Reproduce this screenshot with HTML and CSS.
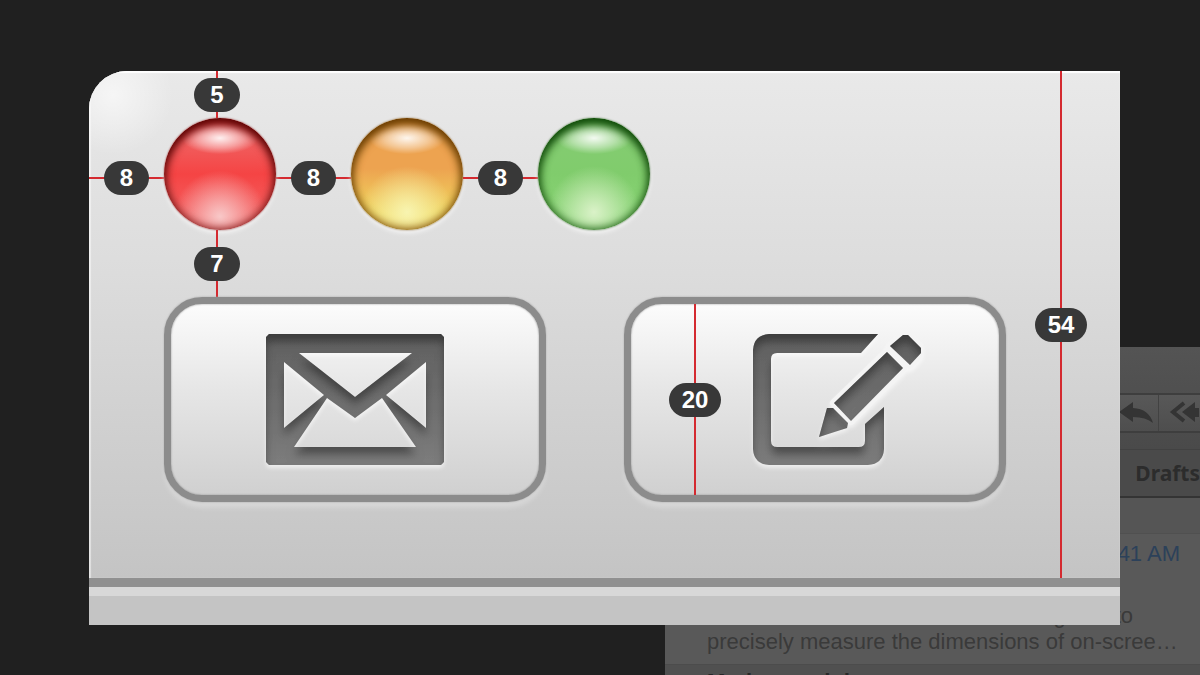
FILE: index.html
```html
<!DOCTYPE html>
<html lang="en">
<head>
  <meta charset="UTF-8" />
  <meta name="viewport" content="width=device-width, initial-scale=1.0" />
  <title>Toolbar dimensions</title>
  <link rel="stylesheet" href="styles.css">
</head>
<body>
  <div class="desktop">

    <!-- mail window in the background -->
    <section class="mail">
      <div class="mail-toolbar">
        <div class="reply-group">
          <button type="button" class="reply" aria-label="Reply">
            <svg width="40" height="32" viewBox="0 0 40 32"><path d="M3 15 L17 5 V11 Q33 12 37 26 Q30 20 17 20 V25 Z"/></svg>
          </button>
          <button type="button" class="reply" aria-label="Reply all">
            <svg width="40" height="32" viewBox="0 0 40 32"><path d="M25 6 L14 15 L25 24" class="chevron"/><path d="M23 15 L36 5 V11 H40 V20 H36 V25 Z"/></svg>
          </button>
        </div>
      </div>
      <div class="mail-tabs">Drafts</div>
      <div class="mail-sort"></div>
      <article class="message">
        <div class="time">41 AM</div>
        <p class="preview"><span class="lead">designers to</span>precisely measure the dimensions of on-scree…</p>
      </article>
      <div class="next">Markup and decor</div>
    </section>

    <!-- enlarged toolbar -->
    <main class="panel">
      <div class="toolbar">
        <div class="lights">
          <div class="measure-h"><span class="pill">8</span></div>
          <div class="light-box">
            <div class="measure-v above"><span class="pill">5</span></div>
            <button type="button" class="light red" aria-label="Close"></button>
            <div class="measure-v below"><span class="pill">7</span></div>
          </div>
          <div class="measure-h"><span class="pill">8</span></div>
          <button type="button" class="light yellow" aria-label="Minimize"></button>
          <div class="measure-h"><span class="pill">8</span></div>
          <button type="button" class="light green" aria-label="Zoom"></button>
        </div>

        <div class="buttons">
          <button type="button" class="tool" aria-label="Get mail">
            <svg class="icon" width="178" height="131" viewBox="0 0 178 131">
              <defs>
                <linearGradient id="metal" x1="0" y1="0" x2="0" y2="131" gradientUnits="userSpaceOnUse">
                  <stop offset="0" stop-color="#606060"/>
                  <stop offset="1" stop-color="#7c7c7c"/>
                </linearGradient>
                <filter id="inset" x="-10%" y="-10%" width="120%" height="120%">
                  <feOffset in="SourceAlpha" dx="0" dy="8"/>
                  <feGaussianBlur stdDeviation="4"/>
                  <feComposite in="SourceAlpha" operator="out" result="edge"/>
                  <feFlood flood-color="#000" flood-opacity="0.6"/>
                  <feComposite in2="edge" operator="in" result="shade"/>
                  <feMerge>
                    <feMergeNode in="SourceGraphic"/>
                    <feMergeNode in="shade"/>
                  </feMerge>
                  <feGaussianBlur stdDeviation="0.7"/>
                </filter>
              </defs>
              <path filter="url(#inset)" fill="url(#metal)" fill-rule="evenodd" d="M3 0 H175 L178 3 V128 L175 131 H3 L0 128 V3 Z
                M33 19 L89 63 L146 19 Z
                M18 28 V94 L58 61 Z
                M160 28 V94 L120 61 Z
                M28 113 H150 L116 64 L89 84 L61 64 Z"/>
            </svg>
          </button>
          <button type="button" class="tool compose" aria-label="New message">
            <svg class="icon" width="170" height="131" viewBox="0 0 170 131">
              <path fill="none" stroke="#f4f4f4" stroke-width="8" stroke-linejoin="round" d="M134 18 L150 34 L98 87 L81 69 Z M150 1 L155 1 L168 14 V19 L157 31 L137 12 Z"/>
              <path filter="url(#inset)" fill="url(#metal)" d="M125 0 L108 19 H24 Q18 19 18 25 V107 Q18 113 24 113 H106 Q112 113 112 107 V90 L131 73 V115 Q130 130 115 131 H16 Q1 130 0 115 V16 Q1 1 16 0 Z
                M134 18 L150 34 L98 87 L81 69 Z
                M150 1 L155 1 L168 14 V19 L157 31 L137 12 Z
                M74 74 L80 74 L95 89 L94 94 L66 103 Z"/>
            </svg>
            <div class="measure-v inside"><span class="pill">20</span></div>
          </button>
        </div>
        <div class="measure-v full"><span class="pill">54</span></div>
      </div>
      <div class="strip"></div>
    </main>

  </div>
</body>
</html>
```

FILE: styles.css
```css
* {
  box-sizing: border-box;
}
body {
  margin: 0;
  background-color: #202020;
  font-family: "Liberation Sans", Arial, sans-serif;
}
button {
  padding: 0;
  border: none;
  background: none;
  font: inherit;
}
svg {
  display: block;
}
.desktop {
  position: relative;
  min-height: 100vh;
  padding: 71px 80px 50px 89px;
  overflow: hidden;
}

/* enlarged toolbar */
.panel {
  position: relative;
  border-top-left-radius: 38px;
  overflow: hidden;
  background: #c4c4c4;
}
.toolbar {
  position: relative;
  padding: 47px 0 76px;
  background:
    radial-gradient(circle 60px at 24px 24px, rgba(255, 255, 255, 0.6), transparent),
    linear-gradient(#e9e9e9, #dcdcdc 40%, #c4c4c4);
  box-shadow: inset 0 2px 1px #fff, inset 2px 0 1px rgba(255, 255, 255, 0.5);
}
.strip {
  height: 47px;
  border-top: 9px solid #909090;
  background: linear-gradient(#d8d8d8 9px, #c4c4c4 9px);
}
.lights {
  display: flex;
  align-items: center;
}
.light-box {
  position: relative;
}
.light {
  display: block;
  width: 112px;
  height: 112px;
  border-radius: 50%;
}
.red {
  background:
    radial-gradient(ellipse 38px 16px at 50% 18%, rgba(255, 255, 255, 0.9), rgba(255, 255, 255, 0.4) 60%, transparent),
    radial-gradient(circle 46px at 50% 88%, #f8c8c8, transparent),
    linear-gradient(#f06060 20%, #f54444 50%, #f46a6a);
  box-shadow: inset 0 6px 10px #5c0000, inset 0 0 9px 2px #9c3030, 0 0 2px #8c4040, 0 3px 5px rgba(255, 255, 255, 0.7);
}
.yellow {
  background:
    radial-gradient(ellipse 38px 16px at 50% 18%, rgba(255, 255, 255, 0.9), rgba(255, 255, 255, 0.4) 60%, transparent),
    radial-gradient(circle 46px at 50% 84%, #f8f4b0, transparent),
    linear-gradient(#eda350 45%, #f0d860 85%);
  box-shadow: inset 0 6px 10px #6b3c00, inset 0 0 9px 2px #94681c, 0 0 2px #806030, 0 3px 5px rgba(255, 255, 255, 0.7);
}
.green {
  background:
    radial-gradient(ellipse 38px 16px at 50% 18%, rgba(255, 255, 255, 0.9), rgba(255, 255, 255, 0.4) 60%, transparent),
    radial-gradient(circle 46px at 50% 84%, #daf2c8, transparent),
    linear-gradient(#86cc74, #80cc6c 50%, #8cd878);
  box-shadow: inset 0 6px 10px #0f4a08, inset 0 0 9px 2px #3c7a30, 0 0 2px #406838, 0 3px 5px rgba(255, 255, 255, 0.7);
}
.buttons {
  display: flex;
  gap: 78px;
  margin: 67px 0 0 75px;
}
.tool {
  position: relative;
  display: flex;
  align-items: center;
  justify-content: center;
  width: 382px;
  height: 205px;
  border: 7px solid #8c8c8c;
  border-radius: 38px;
  background: linear-gradient(#fcfcfc, #e6e6e6 45%, #d0d0d0);
  box-shadow: inset 0 0 2px #8c8c8c, 0 0 2px #a0a0a0, 0 6px 5px rgba(255, 255, 255, 0.25);
}
.compose {
  padding-left: 46px;
}
.icon {
  filter: drop-shadow(0 3px 2px rgba(255, 255, 255, 0.6));
}

/* red measuring lines with their values */
.measure-h,
.measure-v {
  display: flex;
  align-items: center;
  justify-content: center;
}
.measure-h {
  width: 75px;
  margin-top: 8px;
  background: linear-gradient(#d42a30, #d42a30) center / 100% 2px no-repeat;
}
.measure-v {
  position: absolute;
  width: 52px;
  background: linear-gradient(#d42a30, #d42a30) center / 2px 100% no-repeat;
}
.above {
  left: 27px;
  bottom: 100%;
  height: 47px;
}
.below {
  left: 27px;
  top: 100%;
  height: 67px;
}
.inside {
  left: 38px;
  top: 0;
  bottom: 0;
}
.full {
  top: 0;
  bottom: 0;
  right: 33px;
}
.pill {
  padding: 0 16px;
  border-radius: 17px;
  background: #383838;
  color: #fff;
  font-size: 24px;
  font-weight: bold;
  line-height: 34px;
}
.measure-v.inside .pill,
.full .pill {
  padding: 0 13px;
}

/* mail window */
.mail {
  position: absolute;
  left: 665px;
  right: 0;
  top: 347px;
  bottom: 0;
  overflow: hidden;
  background: #595959;
  color: #3a3a3a;
}
.mail-toolbar {
  display: flex;
  justify-content: flex-end;
  height: 102px;
  padding-top: 46px;
  background: linear-gradient(#545454, #4a4a4a);
}
.reply-group {
  display: flex;
  height: 40px;
  border: 2px solid #3e3e3e;
  border-right: none;
  background: linear-gradient(#585858, #4e4e4e);
}
.reply {
  width: 42px;
}
.reply + .reply {
  border-left: 1px solid #424242;
}
.reply svg {
  fill: #343434;
}
.reply .chevron {
  fill: none;
  stroke: #343434;
  stroke-width: 4;
}
.mail-tabs {
  height: 49px;
  border-top: 1px solid #424242;
  border-bottom: 2px solid #343434;
  background: #4a4a4a;
  color: #2c2c2c;
  font-family: "Noto Sans", sans-serif;
  font-size: 21px;
  font-weight: bold;
  line-height: 46px;
  text-align: right;
}
.mail-sort {
  height: 36px;
  border-bottom: 1px solid #505050;
  background: #555;
}
.message {
  padding: 7px 20px 0 42px;
  font-size: 22px;
  line-height: 26px;
}
.time {
  color: #2c415a;
  text-align: right;
}
.preview {
  margin: 36px 0 0;
  white-space: nowrap;
}
.lead {
  display: block;
  width: 426px;
  text-align: right;
}
.next {
  margin-top: 9px;
  padding: 4px 42px;
  border-top: 1px solid #4c4c4c;
  background: #505050;
  color: #282828;
  font-size: 22px;
  font-weight: bold;
}
```
